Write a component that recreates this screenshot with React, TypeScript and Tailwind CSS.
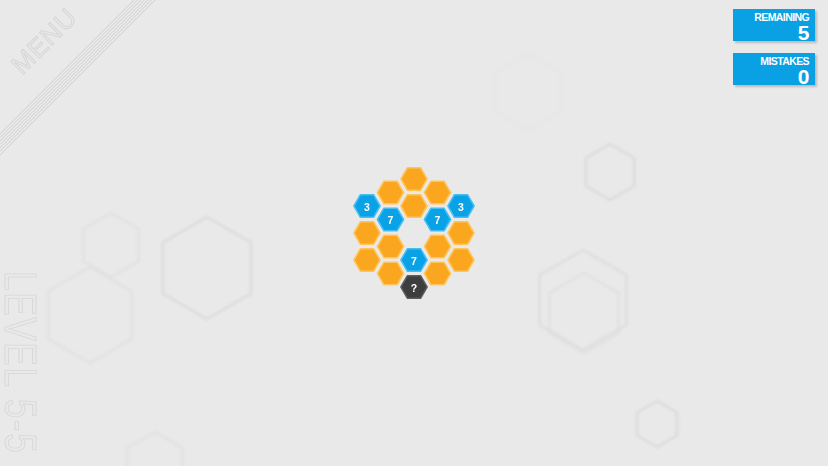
import React from 'react';

type Cell = { col: number; dy: number; kind: 'orange' | 'blue' | 'dark'; label?: string };

const hexPoints = (cx: number, cy: number, r: number, flat: boolean) => {
  const pts: string[] = [];
  for (let i = 0; i < 6; i++) {
    const a = ((flat ? 0 : -90) + 60 * i) * (Math.PI / 180);
    pts.push(`${(cx + r * Math.cos(a)).toFixed(2)},${(cy + r * Math.sin(a)).toFixed(2)}`);
  }
  return pts.join(' ');
};

// board cells, relative to the middle of the page
const cells: Cell[] = [
  { col: -2, dy: -27, kind: 'blue', label: '3' },
  { col: -2, dy: 0, kind: 'orange' },
  { col: -2, dy: 27, kind: 'orange' },
  { col: -1, dy: -40.5, kind: 'orange' },
  { col: -1, dy: -13.5, kind: 'blue', label: '7' },
  { col: -1, dy: 13.5, kind: 'orange' },
  { col: -1, dy: 40.5, kind: 'orange' },
  { col: 0, dy: -54, kind: 'orange' },
  { col: 0, dy: -27, kind: 'orange' },
  { col: 0, dy: 27, kind: 'blue', label: '7' },
  { col: 0, dy: 54, kind: 'dark', label: '?' },
  { col: 1, dy: -40.5, kind: 'orange' },
  { col: 1, dy: -13.5, kind: 'blue', label: '7' },
  { col: 1, dy: 13.5, kind: 'orange' },
  { col: 1, dy: 40.5, kind: 'orange' },
  { col: 2, dy: -27, kind: 'blue', label: '3' },
  { col: 2, dy: 0, kind: 'orange' },
  { col: 2, dy: 27, kind: 'orange' },
];

const palette = {
  orange: { fill: '#fba61f', stroke: '#ffc55c' },
  blue: { fill: '#0aa2e6', stroke: '#48bef0' },
  dark: { fill: '#3d3d3d', stroke: '#5c5c5c' },
};

// faint outlines in the background
const ghosts = [
  { cx: 207, cy: 268, r: 51, o: 0.85 },
  { cx: 610, cy: 172, r: 28, o: 0.85 },
  { cx: 583, cy: 300, r: 50, o: 0.75 },
  { cx: 584, cy: 313, r: 40, o: 0.55 },
  { cx: 657, cy: 424, r: 23, o: 0.85 },
  { cx: 111, cy: 245, r: 32, o: 0.45 },
  { cx: 90, cy: 315, r: 48, o: 0.45 },
  { cx: 155, cy: 464, r: 32, o: 0.45 },
  { cx: 528, cy: 92, r: 38, o: 0.18 },
];

const stripes = [134, 137.5, 141, 144.5, 148, 151.5, 155];

function Counter({ title, value }: { title: string; value: string }) {
  return (
    <div className="w-[82px] h-[32px] bg-[#0aa0e4] shadow-[2px_2px_2px_rgba(0,0,0,0.2)] flex flex-col items-end pr-[6px] pt-[3px] text-white font-['Liberation_Sans',Arial,sans-serif] font-bold">
      <span className="text-[10.5px] leading-none tracking-[-0.6px]">{title}</span>
      <span className="text-[21px] leading-[19px] tracking-[-0.5px]">{value}</span>
    </div>
  );
}

export default function App() {
  return (
    <div className="relative w-[828px] h-[466px] overflow-hidden bg-[#e9e9e9] font-['Liberation_Sans',Arial,sans-serif]">
      <svg className="absolute inset-0" width="828" height="466" viewBox="0 0 828 466">
        <defs>
          <filter id="soft" x="-10%" y="-10%" width="120%" height="120%">
            <feGaussianBlur stdDeviation="1" />
          </filter>
        </defs>
        <g filter="url(#soft)">
          {ghosts.map((g, i) => (
            <polygon
              key={i}
              points={hexPoints(g.cx, g.cy, g.r, false)}
              fill="none"
              stroke="#dcdcdc"
              strokeWidth="3"
              strokeLinejoin="round"
              opacity={g.o}
            />
          ))}
        </g>
        {stripes.map((c) => (
          <line key={c} x1={0} y1={c} x2={c} y2={0} stroke="#d0d0d0" strokeWidth="1" />
        ))}
      </svg>

      {/* menu corner */}
      <div className="absolute left-[44px] top-[41px] -translate-x-1/2 -translate-y-1/2 -rotate-45 text-[26px] leading-none tracking-[1px] text-transparent [-webkit-text-stroke:1px_#d6d6d6]">
        MENU
      </div>

      {/* level name along the left edge */}
      <div className="absolute left-[42px] top-[271px] origin-top-left rotate-90 scale-x-[0.8] whitespace-nowrap text-[44px] leading-none tracking-[2px] text-transparent [-webkit-text-stroke:1px_#d8d8d8]">
        LEVEL 5-5
      </div>

      <div className="absolute top-[9px] right-[13px] flex flex-col gap-[12px]">
        <Counter title="REMAINING" value="5" />
        <Counter title="MISTAKES" value="0" />
      </div>

      <div className="relative w-full h-full flex items-center justify-center">
        <svg width="140" height="150" viewBox="-70 -75 140 150">
          {cells.map((c, i) => {
            const x = c.col * 23.5;
            const p = palette[c.kind];
            return (
              <g key={i}>
                <polygon points={hexPoints(x, c.dy, 13.1, true)} fill={p.fill} stroke={p.stroke} strokeWidth="1.5" strokeLinejoin="round" />
                {c.label && (
                  <text
                    x={x}
                    y={c.dy + 0.5}
                    textAnchor="middle"
                    dominantBaseline="central"
                    fill="#ffffff"
                    fontSize="10.5"
                    fontWeight="700"
                    fontFamily="'Liberation Sans', Arial, sans-serif"
                  >
                    {c.label}
                  </text>
                )}
              </g>
            );
          })}
        </svg>
      </div>
    </div>
  );
}
